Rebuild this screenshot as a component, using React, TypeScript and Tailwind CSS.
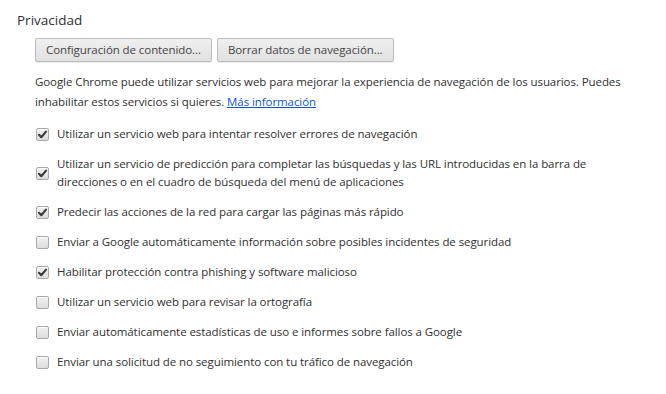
import React from "react";

const items: { label: React.ReactNode; checked: boolean }[] = [
  { label: "Utilizar un servicio web para intentar resolver errores de navegación", checked: true },
  {
    label: (
      <>
        Utilizar un servicio de predicción para completar las búsquedas y las URL introducidas en la barra de
        <br />
        direcciones o en el cuadro de búsqueda del menú de aplicaciones
      </>
    ),
    checked: true,
  },
  { label: "Predecir las acciones de la red para cargar las páginas más rápido", checked: true },
  { label: "Enviar a Google automáticamente información sobre posibles incidentes de seguridad", checked: false },
  { label: "Habilitar protección contra phishing y software malicioso", checked: true },
  { label: "Utilizar un servicio web para revisar la ortografía", checked: false },
  { label: "Enviar automáticamente estadísticas de uso e informes sobre fallos a Google", checked: false },
  { label: "Enviar una solicitud de no seguimiento con tu tráfico de navegación", checked: false },
];

function Checkbox({ checked }: { checked: boolean }) {
  return (
    <span className="relative w-[13px] h-[13px] shrink-0 rounded-[2px] border border-[#a9a9a9] bg-gradient-to-b from-[#f2f2f2] to-[#dcdcdc] shadow-[inset_0_1px_0_#fff]">
      {checked && (
        <svg viewBox="0 0 13 13" className="absolute left-[-1px] top-[-1px] w-[13px] h-[13px]">
          <path d="M3 6.8 L5.3 9.2 L10 3.6" fill="none" stroke="#3a3a3a" strokeWidth="2.1" strokeLinecap="round" strokeLinejoin="round" />
        </svg>
      )}
    </span>
  );
}

function Button({ children }: { children: React.ReactNode }) {
  return (
    <button className="h-[24px] px-[10px] rounded-[2px] border border-[#bcbcbc] bg-gradient-to-b from-[#f0f0f0] to-[#e0e0e0] text-[#444] shadow-[0_1px_0_rgba(0,0,0,0.08)] leading-none">
      {children}
    </button>
  );
}

export default function App() {
  return (
    <div
      className="w-[666px] h-[394px] bg-white text-[#303030] text-[11.5px] tracking-[-0.08px] overflow-hidden"
      style={{ fontFamily: '"Segoe UI", "Open Sans", "Noto Sans", sans-serif' }}
    >
      <div className="pl-[17px] pt-[10px]">
        <h3 className="text-[13.5px] leading-[20px] tracking-normal text-[#303030]">Privacidad</h3>
        <div className="pl-[18px]">
          <div className="flex gap-[5px] mt-[8px]">
            <Button>Configuración de contenido...</Button>
            <Button>Borrar datos de navegación...</Button>
          </div>
          <p className="mt-[10px] leading-[20px]">
            Google Chrome puede utilizar servicios web para mejorar la experiencia de navegación de los usuarios. Puedes
            <br />
            inhabilitar estos servicios si quieres.{" "}
            <a className="text-[#1155cc] underline">Más información</a>
          </p>
          <div className="flex flex-col gap-[12px] mt-[13px] pl-[1px]">
            {items.map((it, i) => (
              <div key={i} className="flex items-center gap-[8px]">
                <Checkbox checked={it.checked} />
                <span className="leading-[18px]">{it.label}</span>
              </div>
            ))}
          </div>
        </div>
      </div>
    </div>
  );
}
